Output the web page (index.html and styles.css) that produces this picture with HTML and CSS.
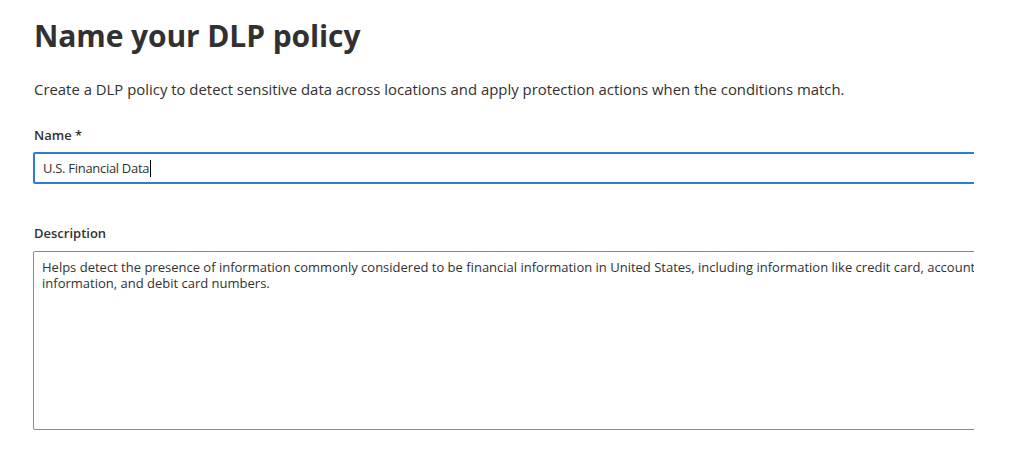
FILE: index.html
```html
<!DOCTYPE html>
<html>
<head>
<meta charset="utf-8">
<link rel="stylesheet" href="styles.css">
</head>
<body>
<main class="page">
  <h1 class="title">Name your DLP policy</h1>
  <p class="intro">Create a DLP policy to detect sensitive data across locations and apply protection actions when the conditions match.</p>
  <div class="field">
    <label class="label">Name *</label>
    <div class="input"><span class="value">U.S. Financial Data</span><span class="caret"></span></div>
  </div>
  <div class="field field-desc">
    <label class="label">Description</label>
    <div class="textarea">Helps detect the presence of information commonly considered to be financial information in United States, including information like credit card, account information, and debit card numbers.</div>
  </div>
</main>
</body>
</html>
```

FILE: styles.css
```css
html, body {
  margin: 0;
  padding: 0;
  background: #ffffff;
}
body {
  font-family: "Open Sans", "Noto Sans", "Liberation Sans", sans-serif;
  color: #323130;
}
.page {
  width: 941px;
  padding-left: 33px;
  overflow: hidden;
}
.title {
  margin: 0;
  padding-top: 14px;
  padding-left: 1px;
  font-size: 30px;
  line-height: 44px;
  font-weight: 700;
  letter-spacing: -0.1px;
  color: #323130;
}
.intro {
  margin: 0;
  padding-top: 21px;
  padding-left: 1px;
  font-size: 14.9px;
  line-height: 20px;
  color: #323130;
}
.field {
  margin-top: 27px;
}
.label {
  display: block;
  font-size: 13px;
  font-weight: 600;
  line-height: 18px;
  padding-left: 1px;
  color: #323130;
}
.input {
  margin-top: 8px;
  width: 1000px;
  height: 28px;
  border: 2px solid #2d7bd8;
  border-radius: 2px;
  display: flex;
  align-items: center;
  padding-left: 8px;
}
.value {
  font-size: 13px;
  letter-spacing: -0.3px;
  color: #323130;
}
.caret {
  width: 1px;
  height: 17px;
  background: #000;
  margin-left: 1px;
}
.field-desc {
  margin-top: 40px;
}
.textarea {
  margin-top: 9px;
  width: 982px;
  height: 164px;
  border: 1px solid #8a8886;
  border-radius: 2px;
  padding: 7px 8px 6px;
  font-size: 13px;
  line-height: 16px;
  color: #323130;
}
```
